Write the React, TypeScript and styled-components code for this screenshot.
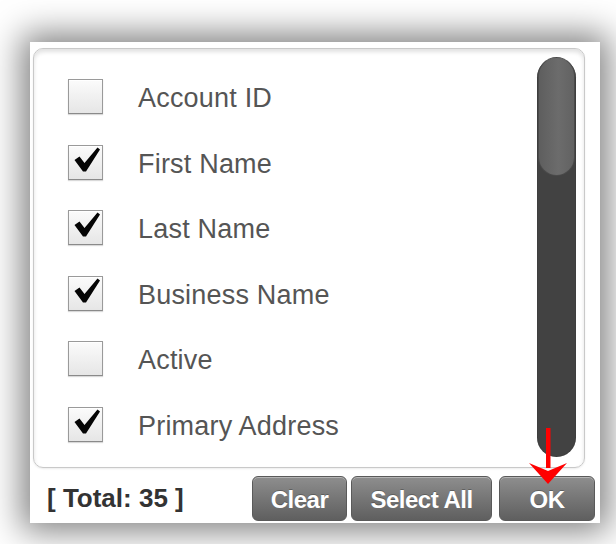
import React, { useState } from 'react'
import styled, { createGlobalStyle } from 'styled-components'

const fields = [
    { id: 1, name: 'Account ID', checked: false },
    { id: 2, name: 'First Name', checked: true },
    { id: 3, name: 'Last Name', checked: true },
    { id: 4, name: 'Business Name', checked: true },
    { id: 5, name: 'Active', checked: false },
    { id: 6, name: 'Primary Address', checked: true },
]

const GlobalStyle = createGlobalStyle`
    html, body {
        margin: 0;
        padding: 0;
        background: #fff;
        font-family: "Liberation Sans", Arial, sans-serif;
    }
`

function CheckMark() {
    return (
        <svg width="35" height="35" viewBox="0 0 35 35">
            <path d="M6.5 15 L11.5 11.5 L16.5 18 L29.5 2.5 L32 4.5 L18 26.5 L15 26.5 Z" fill="#050505" />
        </svg>
    )
}

export default function App() {
    const [items, setItems] = useState(fields)

    function toggle(id: number) {
        setItems((p) => p.map((i) => (i.id === id ? { ...i, checked: !i.checked } : i)))
    }

    return (
        <>
            <GlobalStyle />
            <Page>
                <Panel>
                    <ListBox>
                        <Rows>
                            {items.map((i) => (
                                <Row key={i.id} onClick={() => toggle(i.id)}>
                                    <Box>{i.checked ? <CheckMark /> : null}</Box>
                                    <Label>{i.name}</Label>
                                </Row>
                            ))}
                        </Rows>
                        <Track>
                            <Thumb />
                        </Track>
                    </ListBox>
                    <Footer>
                        <Total>[ Total: 35 ]</Total>
                        <Buttons>
                            <Button $w={95}>Clear</Button>
                            <Button $w={141}>Select All</Button>
                            <Button $w={96} $ml={3}>OK</Button>
                        </Buttons>
                    </Footer>
                    <Arrow width="44" height="58" viewBox="0 0 44 58">
                        <rect x="20" y="0" width="4.5" height="40" fill="#f00" />
                        <path d="M3 35 L22 43 L41 35 L22 56 Z" fill="#f00" />
                    </Arrow>
                </Panel>
            </Page>
        </>
    )
}

const Page = styled.div`
    width: 616px;
    height: 544px;
    padding: 42px 0 0 30px;
    box-sizing: border-box;
    overflow: hidden;
`

const Panel = styled.div`
    position: relative;
    width: 570px;
    height: 481px;
    background: #fff;
    box-sizing: border-box;
    padding: 6px 15px 0 3px;
    display: flex;
    flex-direction: column;
    box-shadow: 0 0 32px 8px rgba(0, 0, 0, 0.5);
`

const ListBox = styled.div`
    height: 420px;
    box-sizing: border-box;
    border: 1px solid #c9c9c9;
    border-radius: 10px;
    box-shadow: inset 0 3px 4px rgba(0, 0, 0, 0.12), 0 1px 2px rgba(0, 0, 0, 0.08);
    display: flex;
    padding: 9px 8px 10px 34px;
    overflow: hidden;
`

const Rows = styled.div`
    flex: 1;
    padding-top: 6px;
    display: flex;
    flex-direction: column;
`

const Row = styled.div`
    height: 66px;
    display: flex;
    align-items: center;
    gap: 35px;
    cursor: pointer;
`

const Box = styled.div`
    width: 35px;
    height: 35px;
    box-sizing: border-box;
    border: 1px solid #9a9a9a;
    border-bottom-color: #8a8a8a;
    background: linear-gradient(#fbfbfb, #e6e6e6);
    box-shadow: inset 0 1px 0 #fff, 0 1px 1px rgba(0, 0, 0, 0.15);
    position: relative;
    svg {
        position: absolute;
        left: -1px;
        top: -1px;
    }
`

const Label = styled.span`
    font-size: 27px;
    color: #555;
    letter-spacing: 0.2px;
    padding-top: 4px;
`

const Track = styled.div`
    width: 39px;
    background: #424242;
    border-radius: 20px;
    box-shadow: inset 0 0 1px rgba(0, 0, 0, 0.6);
    display: flex;
    flex-direction: column;
`

const Thumb = styled.div`
    height: 117px;
    margin: 0 2px;
    border-radius: 18px;
    background: linear-gradient(90deg, #5e5e5e, #6c6c6c 55%, #626262);
    box-shadow: 0 0 0 1px #4a4a4a;
`

const Footer = styled.div`
    flex: 1;
    display: flex;
    align-items: center;
    justify-content: space-between;
    padding: 0 0 0 14px;
    margin-right: -10px;
`

const Total = styled.span`
    font-size: 26px;
    font-weight: bold;
    color: #333;
    margin-top: 5px;
`

const Buttons = styled.div`
    display: flex;
    gap: 4px;
    margin-top: 5px;
`

const Button = styled.button<{ $w: number; $ml?: number }>`
    width: ${(p) => p.$w}px;
    height: 45px;
    margin-left: ${(p) => p.$ml || 0}px;
    border: 1px solid #5a5a5a;
    border-radius: 6px;
    background: linear-gradient(#8e8e8e, #767676 50%, #5f5f5f);
    box-shadow: inset 0 1px 0 rgba(255, 255, 255, 0.35);
    color: #fff;
    font-family: "Liberation Sans", Arial, sans-serif;
    font-size: 24px;
    font-weight: bold;
    letter-spacing: -0.5px;
    text-shadow: 0 -1px 0 rgba(0, 0, 0, 0.25);
    padding: 3px 0 0;
    cursor: pointer;
`

const Arrow = styled.svg`
    position: absolute;
    left: 496px;
    top: 386px;
`
